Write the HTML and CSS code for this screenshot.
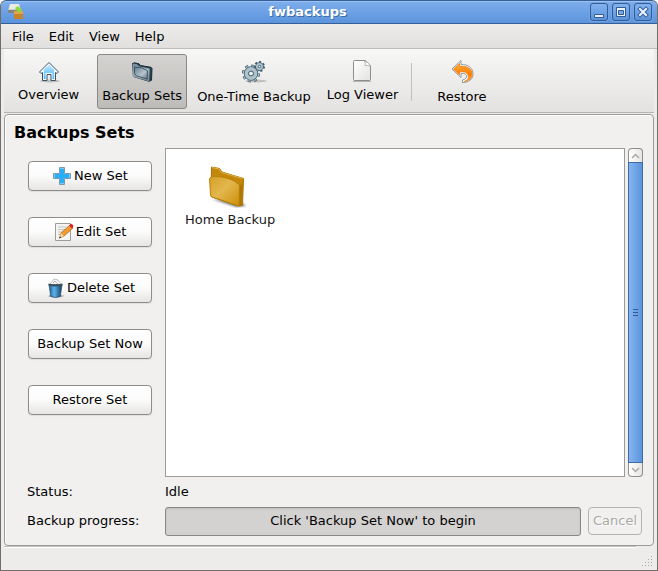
FILE: index.html
```html
<!DOCTYPE html>
<html lang="en">
<head>
<meta charset="utf-8">
<title>fwbackups</title>
<link rel="stylesheet" href="styles.css">
</head>
<body>
<div class="window">
  <header class="titlebar">
    <svg class="app-icon" width="18" height="18" viewBox="0 0 18 18">
      <path d="M3 1h9l2 6v3H1V7z" fill="#c9cbc6"/><path d="M3 1h9l1 5H2z" fill="#e9ebe6"/><path d="M1 7h12v3H1z" fill="#85877f"/>
      <path d="M7 8h9v8H7z" fill="#c8842a"/><path d="M7 8h9v3H7z" fill="#e0a44c"/><path d="M8 5l3-2 4 4-3 3z" fill="#8edb35"/>
    </svg>
    <h1 class="title">fwbackups</h1>
    <div class="controls">
      <button class="control" type="button" aria-label="Minimize"><svg width="16" height="16" viewBox="0 0 16 16"><path d="M3.500 10.500h9v3h-9z" fill="#eaf1fb" stroke="#315c96"/></svg></button>
      <button class="control" type="button" aria-label="Maximize"><svg width="16" height="16" viewBox="0 0 16 16"><path d="M3.500 3.500h9v9h-9z" fill="#eaf1fb" stroke="#315c96"/><path d="M5.500 6.500h5v4h-5z" fill="#78a7e4" stroke="#315c96"/></svg></button>
      <button class="control" type="button" aria-label="Close"><svg width="16" height="16" viewBox="0 0 16 16"><path d="M5 5l6 6m0-6l-6 6" stroke="#315c96" stroke-width="4" stroke-linecap="square"/><path d="M5 5l6 6m0-6l-6 6" stroke="#eaf1fb" stroke-width="2.200" stroke-linecap="square"/></svg></button>
    </div>
  </header>

  <nav class="menubar">
    <button type="button">File</button>
    <button type="button">Edit</button>
    <button type="button">View</button>
    <button type="button">Help</button>
  </nav>

  <div class="toolbar" role="toolbar">
    <button class="tool" type="button">
      <svg width="24" height="24" viewBox="0 0 24 24">
        <defs><linearGradient id="sky" x2="0" y2="1"><stop stop-color="#c4e9ff"/><stop offset="1" stop-color="#3fb2fa"/></linearGradient></defs>
        <ellipse cx="13" cy="21" rx="10" ry="1.500" fill="#000" opacity=".2"/>
        <path d="M12 2.500L2.500 12l1.500 1.500 1.500-1V20.500h4.500v-6h4v6h4.500v-8l1.500 1 1.500-1.500z" fill="#fff" stroke="#35536f"/>
        <path d="M12 4.500l-5.200 5.200V19h1.700v-6h7v6h1.700V9.700z" fill="url(#sky)"/>
      </svg>
      <span>Overview</span>
    </button>
    <button class="tool active" type="button" aria-pressed="true">
      <svg width="26" height="26" viewBox="0 0 26 26">
        <defs><linearGradient id="steel" x2="1" y2="1"><stop stop-color="#66808f"/><stop offset=".6" stop-color="#b5c4cc"/><stop offset="1" stop-color="#60727f"/></linearGradient></defs>
        <path d="M3.500 4.500l2-.7 4.500 1 1.500 1.700 10.500 1.800 1 1-.5 12-2.500 1-15.500-4.800z" fill="#23404e" stroke="#172d38"/>
        <path d="M4 5l4 .7 2 2.100 10.300 2-.5 12L4 17.200z" fill="url(#steel)" stroke="#8ba1ad" stroke-width=".8"/>
        <path d="M5.500 8.300q7-1 13 3.500l-.4 8.300-10.600-3.300q-2-1-2-3z" fill="url(#steel)" stroke="#29424f" stroke-width=".8"/>
      </svg>
      <span>Backup Sets</span>
    </button>
    <button class="tool" type="button">
      <svg width="28" height="28" viewBox="0 0 28 28">
        <ellipse cx="16" cy="23" rx="11" ry="1.500" fill="#000" opacity=".18"/>
        <g fill="none" stroke="#3f6070">
          <circle cx="11" cy="15.500" r="7.300" stroke-width="3.600" stroke-dasharray="2.900 2.833"/>
          <circle cx="19.500" cy="8.500" r="4" stroke-width="3" stroke-dasharray="1.800 1.790"/>
        </g>
        <g fill="none" stroke="#afc2cc">
          <circle cx="11" cy="15.500" r="7" stroke-width="2.600" stroke-dasharray="2 3.498" stroke-dashoffset="-.4"/>
          <circle cx="11" cy="15.500" r="4.700" stroke="#3f6070" stroke-width="5"/>
          <circle cx="11" cy="15.500" r="4.500" stroke-width="3.800"/>
          <circle cx="11" cy="15.500" r="2.400" stroke="#3f6070" fill="#f1f1ef"/>
          <circle cx="19.500" cy="8.500" r="2.600" stroke="#3f6070" stroke-width="3.500"/>
          <circle cx="19.500" cy="8.500" r="2.500" stroke-width="2"/>
          <circle cx="19.500" cy="8.500" r="1.200" stroke="#3f6070" stroke-width=".8" fill="#f1f1ef"/>
        </g>
      </svg>
      <span>One-Time Backup</span>
    </button>
    <button class="tool" type="button">
      <svg width="24" height="24" viewBox="0 0 24 24">
        <defs><linearGradient id="paper" x2="1" y2="1"><stop stop-color="#fff"/><stop offset="1" stop-color="#e2e4e1"/></linearGradient></defs>
        <path d="M3 21.500h18" stroke="#b4b4b0"/>
        <path d="M4.500.500h11l5 5v14a1 1 0 0 1-1 1h-15a1 1 0 0 1-1-1v-18a1 1 0 0 1 1-1z" fill="url(#paper)" stroke="#8b8d89"/>
        <path d="M14.500 1q1.500 2 .5 4.500 3-.5 5.500 1-1-4-6-5.500z" fill="#fff" stroke="#a7a9a5" stroke-width=".8"/>
      </svg>
      <span>Log Viewer</span>
    </button>
    <div class="separator"></div>
    <button class="tool" type="button">
      <svg width="28" height="28" viewBox="0 0 28 28">
        <defs><linearGradient id="fire" x2="0" y2="1"><stop stop-color="#ffae45"/><stop offset=".6" stop-color="#ff7d00"/><stop offset="1" stop-color="#f7a755"/></linearGradient></defs>
        <path d="M13 2.500v4.200c7-.7 12 3.300 12 9.300 0 5-4 8.500-10.500 8.500V22c3-.5 4.500-2.500 4-4.500-.5-1.500-2-2.500-5.500-2v4L4 11z" fill="#fff" stroke="#8c979d"/>
        <path d="M11.500 5.500v3c8-1 12.500 2.500 12.500 7.500 0 4-3 6.800-7.500 7.500 3.500-1.500 4.500-4 3.500-6.500-1-2.700-3.500-3.700-8.500-3v3L5.500 11z" fill="url(#fire)" stroke="#f27908" stroke-width=".8"/>
      </svg>
      <span>Restore</span>
    </button>
  </div>

  <main class="panel">
    <h2>Backups Sets</h2>
    <div class="workspace">
      <div class="actions">
        <button class="button" type="button">
          <svg width="20" height="20" viewBox="0 0 20 20"><path d="M7.500 1.500h5v6h6v5h-6v6h-5v-6h-6v-5h6z" fill="#c5e9fc" stroke="#7b9aac"/><path d="M8 2.500h4V8h5.500v4H12v5.500H8V12H2.500V8H8z" fill="#2aaef7"/></svg>
          New Set
        </button>
        <button class="button" type="button">
          <svg width="20" height="20" viewBox="0 0 20 20"><path d="M1.500 1.500h15v17h-15z" fill="#f4f4f2" stroke="#9b9d98"/><path d="M4 5h8M4 7.500h7M4 10h5M4 12.500h3" stroke="#c2c4bf"/><path d="M7 11l9-8 3 3-9 8-4.500 2z" fill="#f59b2d" stroke="#a35c15" stroke-width=".7"/><path d="M15 3.500l1.500-1.500q2-.5 3 2l-1.500 2.500z" fill="#d8222a"/><path d="M7 11l3 3-4.500 2z" fill="#efd5a5"/><path d="M5 16.500l1-2 1.200 1z" fill="#222"/></svg>
          Edit Set
        </button>
        <button class="button" type="button">
          <svg width="20" height="20" viewBox="0 0 20 20"><defs><linearGradient id="bin"><stop stop-color="#1b5f98"/><stop offset=".4" stop-color="#5db2e7"/><stop offset="1" stop-color="#123f68"/></linearGradient></defs><ellipse cx="11" cy="18" rx="8" ry="1.500" opacity=".25"/><path d="M5 6l4-5 4 1 3 4-2 2H7z" fill="#f7f7f7" stroke="#a4a6a2" stroke-width=".7"/><path d="M8 5l2-2 3 3" fill="none" stroke="#bbb"/><path d="M4 6.500h13l-1.700 12q-4.800 2-9.600 0z" fill="url(#bin)" stroke="#173855" stroke-width=".6"/><path d="M3.500 5.500q7 2 14 0v2q-7 2-14 0z" fill="#3b4f5c"/></svg>
          Delete Set
        </button>
        <button class="button" type="button">Backup Set Now</button>
        <button class="button" type="button">Restore Set</button>
      </div>
      <div class="browser">
        <ul class="sets">
          <li>
            <svg width="48" height="48" viewBox="0 0 48 48">
              <defs><linearGradient id="front" x2="1" y2="1"><stop stop-color="#d6a026"/><stop offset=".45" stop-color="#e3b74e"/><stop offset="1" stop-color="#cc8e04"/></linearGradient><filter id="soft"><feGaussianBlur stdDeviation="1"/></filter></defs>
              <path d="M6 37l24 8 10-1-7-5z" fill="#222b3b" opacity=".6" filter="url(#soft)"/>
              <path d="M5.500 5l8 1.500 2.500 3.500 21.500 6.500-1 27-5 .5L5 34.500z" fill="#c38709" stroke="#a67306"/>
              <path d="M6 5.500L13 7l2.500 3.500 21 6" fill="none" stroke="#e2b346"/>
              <path d="M3.500 16.500q1-2 5-2 16 0 25 8.500l-.5 21L6 35q-1.500-1-1.500-3z" fill="url(#front)" stroke="#b98009"/>
              <path d="M34 24l2.500-3-1 22-2 .5z" fill="#ad7502"/>
            </svg>
            <span>Home Backup</span>
          </li>
        </ul>
        <div class="scrollbar">
          <button type="button" aria-label="Scroll up"><svg width="9" height="6" viewBox="0 0 9 6"><path d="M1 5l3.500-3.500L8 5" fill="none" stroke="#aaa8a5" stroke-width="1.500"/></svg></button>
          <div class="thumb"><i></i><i></i><i></i></div>
          <button type="button" aria-label="Scroll down"><svg width="9" height="6" viewBox="0 0 9 6"><path d="M1 1l3.500 3.500L8 1" fill="none" stroke="#aaa8a5" stroke-width="1.500"/></svg></button>
        </div>
      </div>
    </div>
    <div class="row status"><span class="label">Status:</span><span>Idle</span></div>
    <div class="row">
      <span class="label" id="progress-label">Backup progress:</span>
      <div class="progress" role="progressbar" aria-labelledby="progress-label">Click 'Backup Set Now' to begin</div>
      <button class="button cancel" type="button" disabled>Cancel</button>
    </div>
  </main>

  <footer class="statusbar">
    <div class="message"></div>
    <svg width="12" height="12" viewBox="0 0 12 12"><g stroke="#aaa8a4" stroke-dasharray="1 2"><path d="M10 1.500h1M7 4.500h4M4 7.500h7M1 10.500h10"/></g></svg>
  </footer>
</div>
</body>
</html>
```
FILE: styles.css
```css
* { box-sizing: border-box; }

body {
  margin: 0;
  background: #fff;
  color: #000;
  font: 13px/16px "DejaVu Sans", sans-serif;
}

button {
  margin: 0;
  padding: 0;
  border: 0;
  background: none;
  color: inherit;
  font: inherit;
}

svg { display: block; flex: none; }

.window {
  display: flex;
  flex-direction: column;
  min-height: 100vh;
  border: 1px solid #716d69;
  border-top: 0;
  border-radius: 6px 6px 0 0;
  background: #edeceb;
  overflow: hidden;
}

.titlebar {
  display: flex;
  align-items: center;
  height: 24px;
  margin: 0 -1px;
  padding: 0 5px 0 6px;
  border: 1px solid #365f98;
  border-radius: 6px 6px 0 0;
  background: linear-gradient(#7eaeed, #5b94dc);
  box-shadow: inset 0 1px #9bc0f2;
}

.title {
  flex: 1;
  margin: 0;
  color: #fff;
  font-size: 13px;
  text-align: center;
  text-shadow: 1px 1px #3e6ba5;
}

.controls { display: flex; gap: 4px; }

.control {
  display: grid;
  place-items: center;
  width: 18px;
  height: 18px;
  border: 1px solid #315c96;
  border-radius: 3px;
  background: linear-gradient(#83b2ef, #5b93da);
  box-shadow: 0 0 0 1px #76a5e2;
}

.menubar {
  display: flex;
  gap: 15px;
  height: 25px;
  padding: 1px 11px 0;
  border-bottom: 1px solid #bfbdba;
  background: linear-gradient(#edeceb, #e1e0de);
}

.toolbar {
  display: flex;
  align-items: center;
  height: 64px;
  margin: 0 3px;
  padding: 2px 7px 0;
  border-bottom: 1px solid #b5b3b0;
  background: linear-gradient(#f7f7f6, #e3e2e0);
}

.tool {
  display: flex;
  flex-direction: column;
  align-items: center;
  justify-content: center;
  gap: 3px;
  height: 55px;
  padding: 0 6px;
  border: 1px solid transparent;
  border-radius: 3px;
  white-space: nowrap;
}

.tool:first-child { margin-right: 11px; }
.tool:nth-child(3) { margin: 0 2px 0 3px; }

.tool.active {
  padding: 0 4px;
  border-color: #8a8784;
  background: linear-gradient(#d5d3d1, #bebcb9);
}

.separator {
  width: 1px;
  height: 38px;
  margin: 0 18px 0 6px;
  background: #c1bfbc;
}

.panel {
  flex: 1;
  display: flex;
  flex-direction: column;
  margin: 1px 3px 0;
  padding: 0 10px 9px 9px;
  border: 1px solid #9c9a97;
  border-radius: 4px;
  background: #f1f0ef;
  box-shadow: inset 1px 1px #fff;
}

h2 {
  margin: 9px 0 6px;
  font-size: 16px;
  line-height: 18px;
}

.workspace {
  flex: 1;
  display: flex;
  gap: 13px;
  padding-left: 14px;
}

.actions {
  display: flex;
  flex-direction: column;
  gap: 26px;
  width: 124px;
  padding-top: 13px;
}

.button {
  display: flex;
  align-items: center;
  justify-content: center;
  gap: 2px;
  height: 30px;
  border: 1px solid #8f8c89;
  border-radius: 4px;
  background: linear-gradient(#fff, #fbfbfb 50%, #e6e5e3);
  box-shadow: 0 1px 1px #dedcda;
  white-space: nowrap;
}

.browser { flex: 1; display: flex; gap: 3px; }

.sets {
  flex: 1;
  margin: 0;
  padding: 13px 19px;
  border: 1px solid #9c9a97;
  background: #fff;
  list-style: none;
}

.sets li {
  display: inline-flex;
  flex-direction: column;
  align-items: center;
  gap: 2px;
  color: #1a1a1a;
}

.scrollbar {
  display: flex;
  flex-direction: column;
  width: 15px;
}

.scrollbar button {
  display: grid;
  place-items: center;
  height: 14px;
  border: 1px solid #8f8c89;
  border-bottom: 0;
  border-radius: 4px 4px 0 0;
  background: linear-gradient(90deg, #fff, #e6e5e3);
}

.scrollbar button:last-child {
  border-top: 0;
  border-bottom: 1px solid #8f8c89;
  border-radius: 0 0 4px 4px;
}

.thumb {
  flex: 1;
  display: flex;
  flex-direction: column;
  align-items: center;
  justify-content: center;
  gap: 2px;
  border: 1px solid #3e6ba5;
  background: linear-gradient(90deg, #86b4f0, #5b94dc);
}

.thumb i { width: 5px; height: 1px; background: #315c96; }

.row {
  display: flex;
  align-items: center;
  height: 30px;
  padding-left: 13px;
}

.status { height: 29px; }
.label { width: 138px; }

.progress {
  flex: 1;
  height: 29px;
  padding-top: 5px;
  border: 1px solid #8a8784;
  border-radius: 3px;
  background: #d4d2d0;
  box-shadow: inset 0 1px 2px #bebcb9;
  text-align: center;
}

.cancel {
  width: 54px;
  height: 28px;
  margin: 0 1px 0 7px;
  border-color: #b5b3b0;
  background: #f1f0ef;
  box-shadow: none;
  color: #aaa8a5;
  text-shadow: 1px 1px #fff;
}

.statusbar {
  display: flex;
  align-items: flex-end;
  gap: 5px;
  height: 24px;
  padding: 0 4px 3px 3px;
}

.message {
  flex: 1;
  align-self: stretch;
  border-top: 1px solid #c1bfbc;
  box-shadow: inset 0 1px #fff;
}
```
